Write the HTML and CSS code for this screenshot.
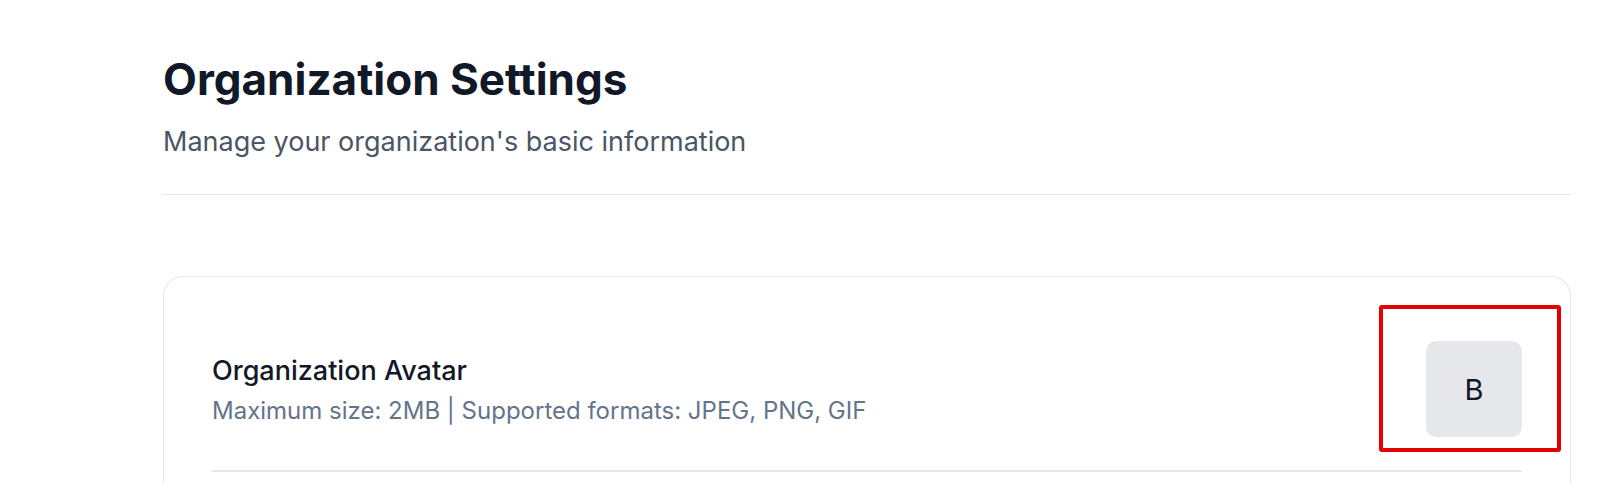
FILE: index.html
```html
<!DOCTYPE html>
<html lang="en">
<head>
    <meta charset="UTF-8">
    <meta name="viewport" content="width=device-width, initial-scale=1.0">
    <title>Organization Settings</title>
    <link rel="stylesheet" href="styles.css">
</head>
<body>
    <main class="page">
        <header class="page-head">
            <h1>Organization Settings</h1>
            <p class="page-sub">Manage your organization's basic information</p>
        </header>
        <section class="card">
            <div class="row">
                <div class="row-text">
                    <div class="row-title">Organization Avatar</div>
                    <div class="row-hint">Maximum size: 2MB | Supported formats: JPEG, PNG, GIF</div>
                </div>
                <div class="avatar-wrap">
                    <div class="avatar">B</div>
                    <span class="highlight"></span>
                </div>
            </div>
        </section>
    </main>
</body>
</html>
```

FILE: styles.css
```css
body {
    margin: 0;
    background: #fff;
    font-family: Inter, "Liberation Sans", sans-serif;
    color: #111827;
}
.page {
    padding: 53px 35px 0 163px;
}
.page-head {
    padding-bottom: 34px;
    border-bottom: 1px solid #e5e7eb;
}
.page-head h1 {
    margin: 0;
    font-size: 44px;
    line-height: 52px;
    font-weight: 700;
    color: #111827;
}
.page-sub {
    margin: 19px 0 0;
    font-size: 27px;
    line-height: 36px;
    color: #4b5563;
}
.card {
    margin-top: 81px;
    padding: 32px 48px 0;
    border: 1px solid #e5e7eb;
    border-bottom: none;
    border-radius: 20px 20px 0 0;
    height: 200px;
}
.row {
    display: flex;
    align-items: center;
    justify-content: space-between;
    padding: 32px 0 33px;
    border-bottom: 2px solid #e5e7eb;
}
.row-text {
    margin-top: 2px;
}
.row-title {
    font-size: 27px;
    line-height: 34px;
    font-weight: 500;
    color: #111827;
}
.row-hint {
    margin-top: 8px;
    font-size: 24px;
    line-height: 30px;
    color: #64748b;
}
.avatar-wrap {
    position: relative;
}
.avatar {
    width: 96px;
    height: 96px;
    border-radius: 10px;
    background: #e5e7eb;
    display: flex;
    align-items: center;
    justify-content: center;
    font-size: 29px;
    color: #111827;
}
.highlight {
    position: absolute;
    top: -36px;
    right: -39px;
    bottom: -15px;
    left: -47px;
    border: 4.5px solid #e60000;
    border-radius: 3px;
}
```
